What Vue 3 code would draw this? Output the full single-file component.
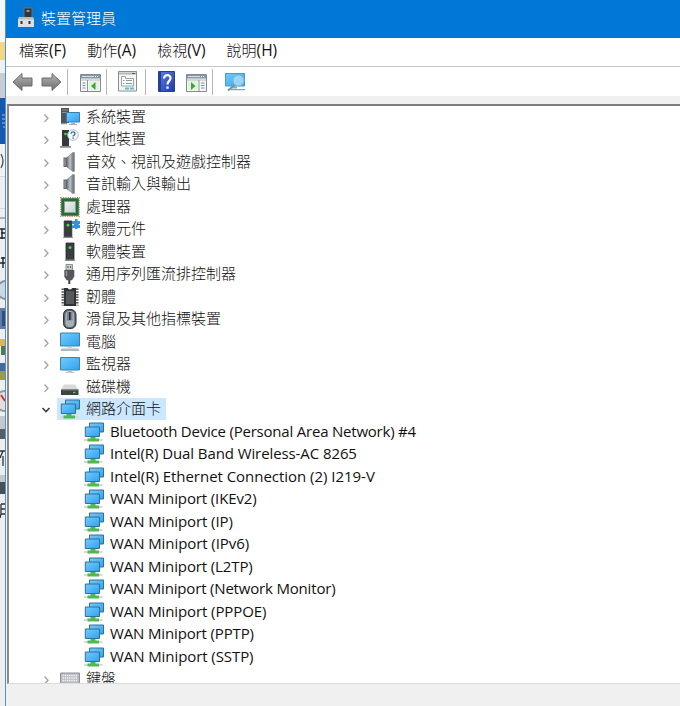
<script setup>
const menus = [
  ['檔案', '(F)'],
  ['動作', '(A)'],
  ['檢視', '(V)'],
  ['說明', '(H)'],
]

const categories = [
  { icon: 'system', label: '系統裝置' },
  { icon: 'unknown', label: '其他裝置' },
  { icon: 'speaker', label: '音效、視訊及遊戲控制器' },
  { icon: 'speaker', label: '音訊輸入與輸出' },
  { icon: 'cpu', label: '處理器' },
  { icon: 'component', label: '軟體元件' },
  { icon: 'software', label: '軟體裝置' },
  { icon: 'usb', label: '通用序列匯流排控制器' },
  { icon: 'firmware', label: '韌體' },
  { icon: 'mouse', label: '滑鼠及其他指標裝置' },
  { icon: 'computer', label: '電腦' },
  { icon: 'monitor', label: '監視器' },
  { icon: 'disk', label: '磁碟機' },
  {
    icon: 'network',
    label: '網路介面卡',
    open: true,
    children: [
      { name: 'Bluetooth Device (Personal Area Network) #4', tracking: -0.21 },
      { name: 'Intel(R) Dual Band Wireless-AC 8265', tracking: -0.09 },
      { name: 'Intel(R) Ethernet Connection (2) I219-V', tracking: -0.03 },
      { name: 'WAN Miniport (IKEv2)', tracking: -0.12 },
      { name: 'WAN Miniport (IP)', tracking: -0.1 },
      { name: 'WAN Miniport (IPv6)', tracking: -0.08 },
      { name: 'WAN Miniport (L2TP)', tracking: -0.12 },
      { name: 'WAN Miniport (Network Monitor)', tracking: -0.18 },
      { name: 'WAN Miniport (PPPOE)', tracking: -0.1 },
      { name: 'WAN Miniport (PPTP)', tracking: -0.14 },
      { name: 'WAN Miniport (SSTP)', tracking: -0.08 },
    ],
  },
  { icon: 'keyboard', label: '鍵盤' },
]
</script>

<template>
  <svg class="defs" width="0" height="0">
    <defs>
      <linearGradient id="screen" x1="0" y1="0" x2="1" y2="1">
        <stop offset="0" stop-color="#74cbfc" />
        <stop offset="1" stop-color="#2ea3f0" />
      </linearGradient>
      <linearGradient id="metal" x1="0" y1="0" x2="1" y2="0">
        <stop offset="0" stop-color="#6d7277" />
        <stop offset=".55" stop-color="#c0c5c9" />
        <stop offset="1" stop-color="#81868b" />
      </linearGradient>
      <linearGradient id="arrow" x1="0" y1="0" x2="0" y2="1">
        <stop offset="0" stop-color="#b4b4b4" />
        <stop offset="1" stop-color="#6e6e6e" />
      </linearGradient>
      <linearGradient id="book" x1="0" y1="0" x2="1" y2="1">
        <stop offset="0" stop-color="#5f7fe0" />
        <stop offset="1" stop-color="#1c3cae" />
      </linearGradient>
      <linearGradient id="die" x1="0" y1="0" x2="1" y2="1">
        <stop offset="0" stop-color="#f2f4f3" />
        <stop offset="1" stop-color="#c7d2cb" />
      </linearGradient>
    </defs>
    <symbol id="system" viewBox="0 0 20 20">
      <path d="M1 1h8v15H1z" fill="#50555b" />
      <path d="M2 3h6M2 5.500h6" stroke="#8c9298" />
      <path d="M1 16h6v1.300H1z" fill="#8f969b" />
      <path d="M6.500 5.500h13V15h-13z" fill="url(#screen)" stroke="#3a7fae" />
      <path d="M11 15.500h4v1.500h-4zM9 17h8v1H9z" fill="#9fb3c0" />
    </symbol>
    <symbol id="unknown" viewBox="0 0 20 20">
      <path d="M2 1h7v16.500H2z" fill="#35393b" />
      <path d="M0 17h11v1.800H0z" fill="#8b8f92" />
      <circle cx="5.500" cy="5" r="1.300" fill="#46df4b" />
      <circle cx="13" cy="6" r="5.300" fill="#f6fafc" stroke="#b2bdc5" />
      <path d="M11.200 4.700c0-2.500 3.800-2.400 3.700 0 0 1.400-1.800 1.400-1.800 2.800m0 1v1.300" fill="none" stroke="#2674bd" stroke-width="1.400" />
    </symbol>
    <symbol id="speaker" viewBox="0 0 20 20">
      <path d="M3.500 5.500h4V15h-4z" fill="#5d6268" />
      <path d="M7 5.500 12.500 .8v18.400L7 15z" fill="url(#metal)" stroke="#777c81" stroke-width=".6" />
      <path d="M12.500 .3h2.200v19.400h-2.200z" fill="#737980" />
      <path d="M5 6.500v7.500" stroke="#a6acb1" />
    </symbol>
    <symbol id="cpu" viewBox="0 0 20 20">
      <path d="M.7 .7h18.600v18.600H.7z" fill="none" stroke="#a59a55" stroke-width="1.200" stroke-dasharray="1.200 1.100" />
      <path d="M1.200 1.200h17.600v17.600H1.200z" fill="#2b6943" />
      <path d="M4.500 4.500h11v11h-11z" fill="url(#die)" stroke="#86a58f" />
    </symbol>
    <symbol id="tower" viewBox="0 0 20 20">
      <path d="M6 1h8v16.500H6z" fill="#3a3d40" stroke="#25282a" stroke-width=".8" />
      <path d="M5 17.500h10V19H5z" fill="#85898c" />
      <circle cx="10" cy="5.500" r="1.500" fill="#43da48" />
    </symbol>
    <symbol id="software" viewBox="0 0 20 20">
      <use href="#tower" width="20" height="20" />
    </symbol>
    <symbol id="component" viewBox="0 0 20 20">
      <use href="#tower" x="-1.500" y="1" width="19" height="19" />
      <path d="M12 2h3V0h2.500v2H20v3h-1.200v1H20v3h-2.500v1H15V9h-3z" fill="#2d93e2" />
      <path d="M12 5h2v1.300h-2z" fill="#d4ebfb" />
    </symbol>
    <symbol id="usb" viewBox="0 0 20 20">
      <path d="M6 .5h6.500V6H6z" fill="#cfd2d4" stroke="#777" stroke-width=".8" />
      <path d="M7.500 2h1v2h-1zm2.700 0h1v2h-1z" fill="#555" />
      <path d="M4.300 6h10v6.500L12 16.200H6.500l-2.200-3.700z" fill="#54585c" />
      <path d="M6.500 7v5" stroke="#92979a" stroke-width="1.500" />
      <path d="M8.300 16h2v4h-2z" fill="#3c3f42" />
    </symbol>
    <symbol id="firmware" viewBox="0 0 20 20">
      <path d="M3 1.500v17M17 1.500v17" stroke="#555" stroke-width="3" stroke-dasharray="1.500 1.200" />
      <path d="M4 1h3.700q2.300 3 4.600 0H16v18H4z" fill="#303335" />
      <path d="M6 4h8v13H6z" fill="#55595c" />
    </symbol>
    <symbol id="mouse" viewBox="0 0 20 20">
      <rect x="3.500" y=".5" width="12.500" height="19" rx="5" fill="#596169" stroke="#30353a" />
      <rect x="5.300" y="2" width="9" height="16" rx="4" fill="#a6b0ba" />
      <path d="M7 3h5.500v8.500H7z" fill="#798591" />
      <path d="M9.800 3v8" stroke="#202a33" stroke-width="1.500" />
    </symbol>
    <symbol id="computer" viewBox="0 0 20 20">
      <path d="M.5 1h19v13H.5z" fill="url(#screen)" stroke="#43819e" />
      <path d="M8 14.500h4V16H8z" fill="#b0bdc4" />
      <path d="M1.500 16.500h17l1 2.500H.5z" fill="#aebbc1" />
      <path d="M5 16h10" stroke="#d8e0e4" />
    </symbol>
    <symbol id="monitor" viewBox="0 0 20 20">
      <path d="M.5 3.500h19v12.500H.5z" fill="url(#screen)" stroke="#43819e" />
      <path d="M8 16.500h4V18H8zM5.500 17.700h9v1h-9z" fill="#b0bec4" />
    </symbol>
    <symbol id="disk" viewBox="0 0 20 20">
      <path d="m4 7.500h11l3.500 5.500H1z" fill="#d8d9da" />
      <path d="M1 12.500h17.500V18H1z" fill="#3f4244" />
      <path d="M2 13h15.500" stroke="#77797b" />
      <path d="M13 14.800h2.500v1.300H13z" fill="#47dc4b" />
    </symbol>
    <symbol id="network" viewBox="0 0 20 20">
      <path d="M5.500 1h14v9h-14z" fill="url(#screen)" stroke="#356f98" />
      <path d="M1.300 5h14.200v9.500H1.300z" fill="url(#screen)" stroke="#356f98" />
      <path d="M0 17h18.500v2H0z" fill="#d6d9d6" />
      <path d="M6.500 15h5v1.500h3.500v3H3.500v-3h3z" fill="#4fb954" />
    </symbol>
    <symbol id="keyboard" viewBox="0 0 20 20">
      <path d="M.5 4h19v11H.5z" fill="#b7bdc3" stroke="#8d949b" />
      <path d="M2.500 6.500h15M2.500 9h15M2.500 11.500h15" stroke="#f3f5f6" stroke-width="1.300" stroke-dasharray="1.400 .8" />
    </symbol>
  </svg>

  <div class="screen">
    <svg class="behind" width="5" height="706" viewBox="0 0 5 706">
      <path d="M0 0h5v706H0z" fill="#eceef0" />
      <path d="M0 0h5v42H0z" fill="#f5f6f6" />
      <path d="M0 42h5v18H0z" fill="#f4d683" />
      <path d="M0 60h5v13H0z" fill="#eef0f2" />
      <path d="M0 73h5v25H0z" fill="#c9cdd3" />
      <path d="M0 98h5v46H0z" fill="#1757b2" />
      <path d="M2 115h3M2 119h3M2 123h3M3 127h2" stroke="#9cc0ec" />
      <path d="M0 144h5v32H0z" fill="#f2f2f2" />
      <path d="M1 154q4 7 0 14" fill="none" stroke="#454545" stroke-width="1.200" />
      <path d="M0 176h5v1H0zM0 208h5v1H0z" fill="#d5d5d5" />
      <path d="M0 217h5v2H0z" fill="#aeb0b3" />
      <path d="M0 229h5M1 233h4M0 238h5M2 229v10M1 258h4M0 263h5M3 257v11" stroke="#252525" stroke-width="1.400" />
      <circle cx="6" cy="290" r="9" fill="#ccd8e1" stroke="#8293a1" stroke-width="2" />
      <path d="M0 308h5v21H0z" fill="#607ba5" />
      <path d="M2 311h3v15H2z" fill="#344c82" />
      <path d="M0 339h5v7H0z" fill="#d8b756" />
      <path d="M1 346h4v9H1z" fill="#57764f" />
      <path d="M0 363h5v8H0z" fill="#416ba1" />
      <path d="M0 371h5v9H0z" fill="#9a9d41" />
      <circle cx="5" cy="401" r="10" fill="#e7dddd" stroke="#909aa2" stroke-width="2" />
      <path d="m1 395 4 6" stroke="#cd3434" stroke-width="2" />
      <path d="M0 416h5v13H0z" fill="#c4c7cb" />
      <path d="M0 429h5v10H0z" fill="#555d65" />
      <path d="M0 451h5M3 451l-3 7M3 456v10" stroke="#333" stroke-width="1.300" />
      <path d="M0 475h5v7H0z" fill="#c4c7cb" />
      <path d="M0 482h5v12H0z" fill="#46505a" />
      <path d="M1 504h4M1 509h4M1 514h4M1 504v10l-1 4" fill="none" stroke="#333" stroke-width="1.300" />
    </svg>

    <main class="window">
      <header class="titlebar">
        <svg width="18" height="22" viewBox="0 0 18 22">
          <path d="M7 1h8v11H7z" fill="#30363b" stroke="#687078" />
          <path d="M9.500 3h3v2h-3z" fill="#8f979d" />
          <path d="M2 10h14l1 2v8H1v-8z" fill="#b8bdc0" />
          <path d="M1 12.500h16V20H1z" fill="#dce0e2" />
          <path d="M3.500 14h2v3h-2zm8 0h2v3h-2z" fill="#2e3439" />
        </svg>
        <span class="title">裝置管理員</span>
      </header>

      <nav class="menubar">
        <span v-for="[name, key] in menus" :key="key">{{ name }}<span class="key">{{ key }}</span></span>
      </nav>

      <div class="toolbar">
        <svg class="back" width="22" height="20" viewBox="0 0 22 20">
          <path d="M1 10 10 1.500v4.500h10v8H10v4.500z" fill="url(#arrow)" stroke="#6c6c6c" />
        </svg>
        <svg class="forward" width="22" height="20" viewBox="0 0 22 20">
          <path d="M21 10 12 1.500v4.500H2v8h10v4.500z" fill="url(#arrow)" stroke="#6c6c6c" />
        </svg>
        <i class="sep"></i>
        <svg class="pane" width="21" height="18" viewBox="0 0 21 18">
          <path d="M.5 .5h20v17H.5z" fill="#f6f7f7" stroke="#85898d" />
          <path d="M1 1h19v3.500H1z" fill="#8a98a6" />
          <path d="M2 2.500h12" stroke="#d5dee6" />
          <path d="M15 2.500h1m1 0h1" stroke="#fff" />
          <path d="M1 6h19" stroke="#b3b7ba" />
          <path d="M7.500 6v11" stroke="#8e9397" />
          <path d="M2.500 9h3M2.500 11.500h3M2.500 14h3" stroke="#748fac" />
          <path d="M9 7h10v9H9z" fill="#e3f2df" />
          <path d="m15.500 8-4.500 4 4.500 4z" fill="#39a635" />
        </svg>
        <i class="sep"></i>
        <svg class="props" width="19" height="21" viewBox="0 0 19 21">
          <path d="M.5 .5h18v19.500H.5z" fill="#f4f5f5" stroke="#8a8e91" />
          <path d="M1 2.500h17" stroke="#b3b7ba" stroke-width="2" />
          <path d="M14 2.500h3" stroke="#565a5e" />
          <path d="M3.500 5.500h4v2h8V15h-12z" fill="#fff" stroke="#9ba2a8" />
          <path d="M5 9.500h1.500M5 12.500h1.500M8 9.500h6M8 12.500h6" stroke="#7f9ab0" />
          <path d="M7 17.500h4M12 17.500h4" stroke="#64b6ca" stroke-width="2" />
        </svg>
        <i class="sep wide"></i>
        <svg class="help" width="17" height="21" viewBox="0 0 17 21">
          <path d="M.5 .5h16v20H.5z" fill="url(#book)" stroke="#2b3e91" />
          <path d="M2 1v19" stroke="#233d9e" stroke-width="2" />
          <path d="M6 7.500C6 3 13 3 12.500 7.500 12.300 10 9.500 10 9.500 13.500" fill="none" stroke="#fff" stroke-width="2.200" />
          <path d="M8.400 15.500h2.300v2.300H8.400z" fill="#fff" />
        </svg>
        <svg class="action" width="21" height="18" viewBox="0 0 21 18">
          <path d="M.5 .5h20v17H.5z" fill="#f6f7f7" stroke="#85898d" />
          <path d="M1 1h19v3.500H1z" fill="#8a98a6" />
          <path d="M2 2.500h12" stroke="#d5dee6" />
          <path d="M15 2.500h1m1 0h1" stroke="#fff" />
          <path d="M1 6h19" stroke="#b3b7ba" />
          <path d="M13 6v11" stroke="#8e9397" />
          <path d="M15 9h3.500M15 11.500h3.500M15 14h3.500" stroke="#748fac" />
          <path d="M2 7h10v9H2z" fill="#e3f2df" />
          <path d="m5 8 4.500 4L5 16z" fill="#39a635" />
        </svg>
        <i class="sep"></i>
        <svg class="scan" width="22" height="20" viewBox="0 0 22 20">
          <path d="M1.500 1.500h19V14h-19z" fill="url(#screen)" stroke="#4a9bcd" />
          <path d="M8 14.500h5v2H8zM6 17h15v1.300H6z" fill="#8ba7b7" />
          <path d="m11.500 12-7.500 6.500" stroke="#7895a8" stroke-width="2" />
          <circle cx="14.500" cy="8.500" r="5.500" fill="#a8daf5" fill-opacity=".85" stroke="#7db4d6" />
        </svg>
      </div>

      <section class="content">
        <ul class="tree">
          <template v-for="c in categories" :key="c.label">
            <li class="row">
              <svg class="chevron" width="10" height="10" viewBox="0 0 10 10">
                <path v-if="c.open" class="opened" d="m1.500 3 3.500 3.500L8.500 3" />
                <path v-else d="m3.500 1.500 3.500 3.700-3.500 3.700" />
              </svg>
              <span class="item" :class="{ selected: c.open }">
                <svg class="icon" width="20" height="20"><use :href="'#' + c.icon" /></svg>
                <span class="label">{{ c.label }}</span>
              </span>
            </li>
            <li v-for="d in c.children" :key="d.name" class="row child">
              <svg class="icon" width="20" height="20"><use href="#network" /></svg>
              <span class="label" :style="{ letterSpacing: d.tracking + 'px' }">{{ d.name }}</span>
            </li>
          </template>
        </ul>
      </section>
      <footer class="status"></footer>
    </main>
  </div>
</template>

<style>
body {
  margin: 0;
  overflow: hidden;
}
</style>

<style scoped>
.defs {
  position: absolute;
}
.screen {
  display: flex;
  width: 680px;
  height: 706px;
  overflow: hidden;
  font-family: 'Open Sans', 'Noto Sans CJK TC', sans-serif;
  font-size: 15px;
  color: #111;
}
.behind {
  flex: none;
}
.window {
  flex: 1;
  min-width: 0;
  display: flex;
  flex-direction: column;
  border-left: 1px solid #4b94ce;
  background: #f0f0f0;
}
.titlebar {
  flex: none;
  height: 38px;
  box-sizing: border-box;
  display: flex;
  align-items: center;
  gap: 6px;
  padding: 0 0 2px 11px;
  background: #0078d7;
  color: #fff;
  font-weight: 300;
  font-family: 'Noto Sans CJK TC', sans-serif;
}
.title {
  padding-bottom: 2px;
}
.menubar {
  flex: none;
  height: 29px;
  box-sizing: border-box;
  display: flex;
  align-items: center;
  gap: 21px;
  padding: 0 0 4px 13px;
  background: #fff;
  border-bottom: 1px solid #c6c6c6;
  font-weight: 300;
}
.menubar span {
  white-space: nowrap;
}
.menubar .key {
  font-weight: 400;
  font-size: 15.5px;
  letter-spacing: 0;
}
.toolbar {
  flex: none;
  height: 29px;
  display: flex;
  align-items: center;
  padding-left: 6px;
  background: #fff;
}
.toolbar svg {
  flex: none;
}
.forward {
  margin-left: 6px;
}
.sep {
  width: 1px;
  height: 26px;
  margin-left: 5px;
  background: #b5b5b5;
}
.wide {
  margin-left: 8px;
}
.pane {
  margin: 3px 0 0 12px;
}
.props {
  margin-left: 11px;
}
.help {
  margin-left: 12px;
}
.action {
  margin: 3px 0 0 11px;
}
.scan {
  margin-left: 11px;
}
.content {
  flex: none;
  height: 577px;
  margin: 8px 0 0 1px;
  border-top: 2px solid #7d7d7d;
  border-left: 2px solid #8b8b8b;
  border-bottom: 1px solid #dcdcdc;
  background: #fff;
  overflow: hidden;
}
.tree {
  margin: -0.75px 0 0;
  padding: 0;
  list-style: none;
}
.row {
  display: flex;
  align-items: center;
  height: 22.5px;
  padding-left: 32px;
}
.chevron {
  flex: none;
  margin-top: 2.500px;
  fill: none;
  stroke: #a0a0a0;
  stroke-width: 1.300;
}
.opened {
  stroke: #404040;
  stroke-width: 1.600;
}
.item {
  display: flex;
  align-items: center;
  height: 22px;
  margin-left: 6px;
  padding: 0 5px 0 3px;
}
.selected {
  background: #cce8ff;
}
.icon {
  flex: none;
}
.label {
  margin-left: 6px;
  padding-bottom: 2px;
  line-height: 22px;
  white-space: nowrap;
  font-weight: 300;
}
.child {
  padding-left: 75px;
}
.child .label {
  font-weight: 400;
}
</style>
